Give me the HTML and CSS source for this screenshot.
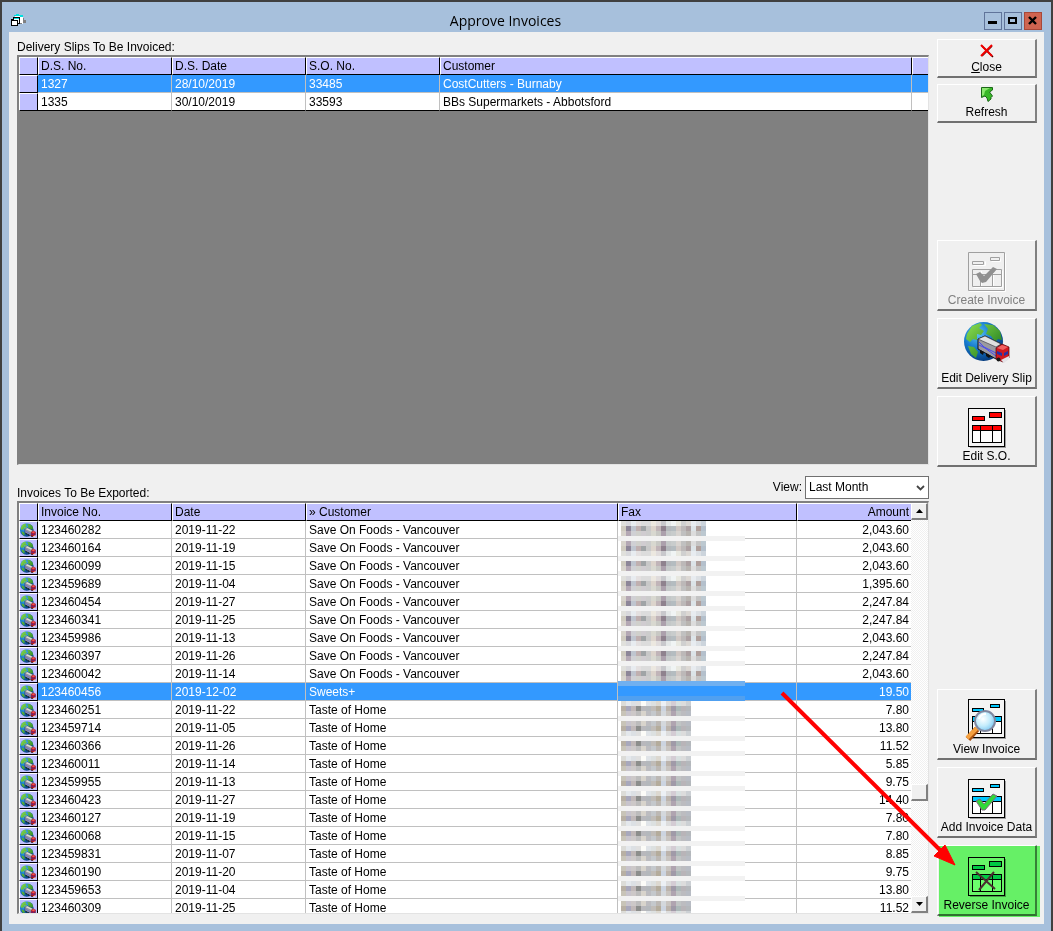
FILE: index.html
```html
<!DOCTYPE html>
<html lang="en">
<head>
  <meta charset="utf-8">
  <title>Approve Invoices</title>
  <meta name="viewport" content="width=device-width, initial-scale=1">
  <link rel="stylesheet" href="styles.css">
</head>
<body>
  <!-- shared drawings -->
  <svg class="defs" width="0" height="0" aria-hidden="true">
    <defs>
      <radialGradient id="sea" cx="0.35" cy="0.3" r="0.75">
        <stop offset="0" stop-color="#5cc4f4"/>
        <stop offset="0.5" stop-color="#1478cc"/>
        <stop offset="1" stop-color="#063878"/>
      </radialGradient>
      <linearGradient id="land" x1="0" y1="0" x2="1" y2="1">
        <stop offset="0" stop-color="#8ee050"/>
        <stop offset="1" stop-color="#127018"/>
      </linearGradient>
      <radialGradient id="lens" cx="0.4" cy="0.4" r="0.7">
        <stop offset="0" stop-color="#ffffff"/>
        <stop offset="0.5" stop-color="#c4ecfc"/>
        <stop offset="1" stop-color="#70c0f0"/>
      </radialGradient>
      <symbol id="globe-truck" viewBox="0 0 46 42">
        <circle cx="19.5" cy="19.5" r="19.5" fill="url(#sea)"/>
        <path d="M3 12 L8 4 L16 1 L18 3 L15 6 L20 9 L17 13 L13 12 L13 18 L9 17 L6 20 L2 17z M20 2 L29 3 L36 9 L38 18 L34 17 L31 20 L27 14 L22 12 L24 7z M4 24 L10 25 L14 30 L12 36 L7 32z" fill="url(#land)"/>
        <path d="M14 17 L21 14 L37 22 L37 35 L32 37 L14 27z" fill="#9a9aa0" stroke="#101018"/>
        <path d="M14 17 L21 14 L37 22 L32 25z" fill="#e0e0e0" stroke="#303038" stroke-width="0.6"/>
        <path d="M15 20 L20 25 L32 31 M15 23 L21 26 L32 34" fill="none" stroke="#4848f0"/>
        <path d="M16 28 L20 30 L19 33 L16 31z M22 31 L27 34 L25 36 L22 34z" fill="#101010"/>
        <path d="M32 26 L38 22 L45 25 L45 36 L39 40 L32 37z" fill="#d01820" stroke="#500008" stroke-width="0.7"/>
        <path d="M33 26 L38 23 L44 25 L39 28z" fill="#f06060"/>
        <path d="M33 29 L38 31 L38 34 L33 32z M40 31 L44 29 L44 32 L40 34z" fill="#2430a8"/>
        <path d="M37 38 L45 34 L45 37 L40 41z" fill="#e4e4e8"/>
        <circle cx="34.500" cy="37.500" r="2" fill="#181818"/>
      </symbol>
    </defs>
  </svg>

  <div class="window">
    <header class="titlebar">
      <svg class="app-icon" width="16" height="14" viewBox="0 0 16 14" shape-rendering="crispEdges" aria-hidden="true">
        <path d="M4 1h4v1h4v8H4z" fill="#fff"/>
        <path d="M3 1h2V0h3v1h4v2H9V2H3z" fill="#00e0e0"/>
        <path d="M12 4h1v2h2v3h-4v1H9V9h3z" fill="#808080"/>
        <path d="M2.500 3.500h6v6h-2v2h-6v-6h2z" fill="#fff" stroke="#000"/>
        <path d="M.5 6.500h6M6.500 6v4" fill="none" stroke="#000"/>
        <path d="M3 4h5v1H3z" fill="#00e0e0"/>
      </svg>
      <h1>Approve Invoices</h1>
      <div class="window-buttons">
        <button type="button" aria-label="Minimize"><svg width="16" height="16" viewBox="0 0 16 16"><path d="M3 8h9v3H3z"/></svg></button>
        <button type="button" aria-label="Maximize"><svg width="16" height="16" viewBox="0 0 16 16"><path d="M3 4h9v7H3z M5 6v3h5V6z" fill-rule="evenodd"/></svg></button>
        <button type="button" class="win-close" aria-label="Close window"><svg width="16" height="16" viewBox="0 0 16 16"><path d="M4 4l7 7M11 4l-7 7" stroke="#000" stroke-width="2.400"/></svg></button>
      </div>
    </header>

    <main class="client">
      <div class="lists">
        <h2 class="slips-label" id="slips-label">Delivery Slips To Be Invoiced:</h2>
        <div class="grid">
          <div class="grid-body">
            <table class="slips" aria-labelledby="slips-label">
              <colgroup><col class="c-mark"><col class="c-no"><col class="c-no"><col class="c-no"><col><col class="c-end"></colgroup>
              <thead>
                <tr><th></th><th>D.S. No.</th><th>D.S. Date</th><th>S.O. No.</th><th>Customer</th><th></th></tr>
              </thead>
              <tbody>
                <tr class="selected"><th></th><td>1327</td><td>28/10/2019</td><td>33485</td><td>CostCutters - Burnaby</td><td></td></tr>
                <tr><th></th><td>1335</td><td>30/10/2019</td><td>33593</td><td>BBs Supermarkets - Abbotsford</td><td></td></tr>
              </tbody>
            </table>
          </div>
        </div>

        <div class="list-bar">
          <h2 id="invoices-label">Invoices To Be Exported:</h2>
          <label for="view">View:</label>
          <span class="select">
            <select id="view">
              <option>Last Month</option>
              <option>This Month</option>
              <option>All</option>
            </select>
            <svg width="9" height="7" viewBox="0 0 9 7" aria-hidden="true"><path d="M1 1l3.500 3.500L8 1" fill="none" stroke="#444" stroke-width="1.800"/></svg>
          </span>
        </div>

        <div class="grid">
          <div class="grid-body white">
            <table aria-labelledby="invoices-label">
              <colgroup><col class="c-mark"><col class="c-no"><col class="c-no"><col class="c-customer"><col><col class="c-amount"></colgroup>
              <thead>
                <tr><th></th><th>Invoice No.</th><th>Date</th><th>» Customer</th><th>Fax</th><th class="num">Amount</th></tr>
              </thead>
              <tbody id="invoices"></tbody>
            </table>
            <svg class="redacted" id="redacted" width="127" height="396" shape-rendering="crispEdges" aria-hidden="true"></svg>
          </div>
          <div class="scrollbar">
            <button type="button" aria-label="Scroll up"><svg width="7" height="4" viewBox="0 0 7 4"><path d="M0 4L3.500 0L7 4z"/></svg></button>
            <div class="track-before"></div>
            <div class="thumb"></div>
            <div class="track-after"></div>
            <button type="button" aria-label="Scroll down"><svg width="7" height="4" viewBox="0 0 7 4"><path d="M0 0h7L3.500 4z"/></svg></button>
          </div>
        </div>
      </div>

      <aside class="actions">
        <div class="group top">
          <button type="button" class="action small">
            <svg width="14" height="15" viewBox="0 0 14 15" aria-hidden="true">
              <path d="M2 2L13 13M12 2L2 12" stroke="#400" stroke-width="1.500"/>
              <path d="M1 1L12 12M12 1L1 12" stroke="#f00000" stroke-width="2"/>
            </svg>
            <span><u>C</u>lose</span>
          </button>
          <button type="button" class="action small">
            <svg width="14" height="17" viewBox="0 0 14 17" aria-hidden="true">
              <path d="M1.500.500H12.500V3L9.500 5L12.500 9L11 10.500V12L8 14.500L7 11L5 9L1.500 10.500z" fill="#38b828" stroke="#1c6818"/>
              <path d="M2 1h8L5 4 4 8 2 9z" fill="#8ce870"/>
            </svg>
            <span>Refresh</span>
          </button>
        </div>

        <div class="group edit">
          <button type="button" class="action" disabled>
            <svg width="38" height="40" viewBox="0 0 38 40" aria-hidden="true">
              <g fill="none" stroke="#fff"><path d="M1.500 39.500h36v-38M5.500 13.500h12v-4M23.500 9.500h9v-3M5.500 35.500h29v-17M13.500 19v16M25.500 19v16"/></g>
              <g fill="none" stroke="#a0a0a0"><path d="M.5.500h36v38h-36zM4.500 9.500h11v3h-11zM22.500 5.500h9v3h-9zM4.500 17.500h29v17h-29zM4.500 22.500h29M12.500 23v11M24.500 23v11"/></g>
              <path d="M8 22l4-2 4 4 9-9 4 2-11 13-4 1-2-2z" fill="#909090"/>
            </svg>
            <span>Create Invoice</span>
          </button>
          <button type="button" class="action">
            <svg width="46" height="48" viewBox="0 0 46 48" aria-hidden="true"><use href="#globe-truck" width="46" height="42"/></svg>
            <span>Edit Delivery Slip</span>
          </button>
          <button type="button" class="action">
            <svg width="38" height="40" viewBox="0 0 38 40" shape-rendering="crispEdges" aria-hidden="true">
              <path d="M2 39.500h35.500V2" fill="none" stroke="#a0a0a0"/>
              <path d="M.5.500h36v38h-36z" fill="#f4f4f4" stroke="#000"/>
              <path d="M4.500 17.500h29v17h-29z" fill="#fff" stroke="#000"/>
              <path d="M4.500 8.500h12v4h-12zM21.500 4.500h12v5h-12zM4.500 17.500h29v5h-29z" fill="#f00" stroke="#000"/>
              <path d="M12.500 18v16M24.500 18v16" stroke="#000"/>
            </svg>
            <span>Edit S.O.</span>
          </button>
        </div>

        <div class="group invoice">
          <button type="button" class="action">
            <svg width="44" height="42" viewBox="-3 0 44 42" aria-hidden="true">
              <g shape-rendering="crispEdges">
                <path d="M2 39.500h35.500V2" fill="none" stroke="#a0a0a0"/>
                <path d="M.5.500h36v38h-36z" fill="#f4f4f4" stroke="#000"/>
                <path d="M4.500 17.500h29v17h-29z" fill="#fff" stroke="#000"/>
                <path d="M4.500 9.500h11v3h-11zM22.500 5.500h9v3h-9zM4.500 17.500h29v5h-29z" fill="#00c8ff" stroke="#000"/>
                <path d="M12.500 23v11M24.500 23v11" stroke="#000"/>
              </g>
              <path d="M9 30L0 40" stroke="#a85010" stroke-width="6"/>
              <path d="M9 29L-1 39" stroke="#f4a040" stroke-width="4"/>
              <circle cx="17" cy="22" r="10" fill="url(#lens)" stroke="#8088a0" stroke-width="2"/>
              <path d="M11 20a7 7 0 0 1 7-5" fill="none" stroke="#fff" stroke-width="2"/>
            </svg>
            <span>View Invoice</span>
          </button>
          <button type="button" class="action">
            <svg width="38" height="40" viewBox="0 0 38 40" aria-hidden="true">
              <g shape-rendering="crispEdges">
                <path d="M2 39.500h35.500V2" fill="none" stroke="#a0a0a0"/>
                <path d="M.5.500h36v38h-36z" fill="#f4f4f4" stroke="#000"/>
                <path d="M4.500 17.500h29v17h-29z" fill="#fff" stroke="#000"/>
                <path d="M4.500 9.500h11v3h-11zM22.500 5.500h9v3h-9zM4.500 17.500h29v5h-29z" fill="#00c8ff" stroke="#000"/>
                <path d="M12.500 23v11M24.500 23v11" stroke="#000"/>
              </g>
              <path d="M8 22l4-2 4 5 9-10 4 2-12 14h-3z" fill="#30d838" stroke="#806880"/>
            </svg>
            <span>Add Invoice Data</span>
          </button>
          <button type="button" class="action highlight">
            <svg width="38" height="40" viewBox="0 0 38 40" aria-hidden="true">
              <g shape-rendering="crispEdges">
                <path d="M2 39.500h35.500V2" fill="none" stroke="#a0a0a0"/>
                <path d="M.5.500h36v38h-36z" fill="#f4f4f4" stroke="#000"/>
                <path d="M4.500 17.500h29v17h-29z" fill="#fff" stroke="#000"/>
                <path d="M4.500 8.500h12v4h-12zM21.500 4.500h12v5h-12zM4.500 17.500h29v5h-29z" fill="#00c8a0" stroke="#000"/>
                <path d="M12.500 18v16M24.500 18v16" stroke="#000"/>
              </g>
              <path d="M8 15L27 32M26 15L11 33" stroke="#b03070" stroke-width="2"/>
            </svg>
            <span>Reverse Invoice</span>
          </button>
        </div>
      </aside>

      <svg class="pointer" width="176" height="176" viewBox="0 0 176 176" aria-hidden="true">
        <path d="M2 3L160 160" stroke="#f00" stroke-width="4"/>
        <path d="M175 175L154 166L165 155z" fill="#f00" stroke="#f00"/>
      </svg>
    </main>
  </div>

  <script src="invoices.js"></script>
</body>
</html>
```
FILE: styles.css
```css
* { box-sizing: border-box; }

body {
  margin: 0;
  font: 12px/16px "Liberation Sans", Arial, sans-serif;
  color: #000;
}
h1, h2 { margin: 0; font-weight: normal; font-size: inherit; }
button, select { font: inherit; color: inherit; }
svg { display: block; flex: none; }
.defs { position: absolute; }

/* window frame */
.window {
  display: flex;
  flex-direction: column;
  height: 100vh;
  min-height: 800px;
  padding: 0 7px 7px;
  background: #a7c0dc;
  border: 2px solid #404040;
  border-bottom: 0;
}
.titlebar {
  display: flex;
  align-items: center;
  height: 30px;
  padding: 7px 2px 0 2px;
  flex: none;
}
.titlebar h1 {
  flex: 1;
  font: 14px/20px "Open Sans", "Noto Sans", sans-serif;
  text-align: center;
}
.window-buttons { display: flex; gap: 2px; }
.window-buttons button {
  width: 18px;
  height: 18px;
  padding: 0;
  background: #a7c0dc;
  border: 1px solid #60749a;
}
.window-buttons .win-close { background: #cf6450; border-color: #a84838; }

.client {
  position: relative;
  display: flex;
  gap: 8px;
  flex: 1;
  min-height: 0;
  padding: 0 7px 0 8px;
  background: #f0f0f0;
}

/* left side: two lists */
.lists {
  flex: 1;
  min-width: 0;
  display: grid;
  grid-template-columns: minmax(0, 1fr);
  grid-template-rows: 23px 410fr 36px 413fr;
  padding-bottom: 10px;
}
.slips-label { padding-top: 7px; }
.list-bar {
  display: flex;
  align-items: center;
  gap: 3px;
  padding-top: 8px;
}
.list-bar h2 { flex: 1; padding-top: 12px; }
.select { position: relative; width: 124px; }
.select select {
  display: block;
  width: 100%;
  height: 23px;
  padding: 0 3px;
  appearance: none;
  background: #fff;
  border: 1px solid #707070;
  border-radius: 0;
}
.select svg { position: absolute; right: 4px; top: 9px; }

.grid {
  display: flex;
  min-height: 0;
  border: 2px solid #696969;
  border-top-color: #808080;
  border-left-color: #808080;
  border-right: 1px solid #e3e3e3;
  border-bottom: 1px solid #e3e3e3;
}
.grid-body {
  position: relative;
  flex: 1;
  overflow: hidden;
  background: #808080;
}
.grid-body.white { background: #fff; }

table {
  width: 100%;
  table-layout: fixed;
  border-collapse: separate;
  border-spacing: 0;
}
.c-mark { width: 19px; }
.c-no { width: 134px; }
.c-customer { width: 312px; }
.c-amount { width: 114px; }
.c-end { width: 16px; }
th, td {
  height: 18px;
  padding: 0 2px;
  line-height: 16px;
  font-weight: normal;
  text-align: left;
  white-space: nowrap;
  overflow: hidden;
}
th {
  background: #c0c0ff;
  border: 1px solid #000;
  border-top-color: #fff;
  border-left-color: #fff;
}
td {
  padding: 0 3px;
  background: #fff;
  border-right: 1px solid #c0c0c0;
  border-bottom: 1px solid #c0c0c0;
}
th:last-child, td:last-child { border-right: 0; }
tbody th { padding: 0; }
.slips tbody tr:last-child td { border-bottom-color: #000; }
.num { text-align: right; padding-right: 2px; }
.selected td { background: #3399ff; color: #fff; }

/* blurred out fax numbers, lies over the Fax column */
.redacted { position: absolute; top: 18px; right: 166px; }

.scrollbar {
  display: flex;
  flex-direction: column;
  width: 17px;
  background: repeating-conic-gradient(#fff 0 25%, #f0f0f0 0 50%) 0 0 / 2px 2px;
}
.scrollbar button, .thumb {
  display: flex;
  align-items: center;
  justify-content: center;
  flex: none;
  width: 17px;
  height: 17px;
  padding: 0;
  background: #f0f0f0;
  border: 1px solid #fff;
  border-right: 2px solid #808080;
  border-bottom: 2px solid #808080;
}
.track-before { flex: 264; }
.track-after { flex: 95; }

/* right side: buttons */
.actions {
  display: flex;
  flex-direction: column;
  width: 100px;
  padding: 7px 0 8px;
}
.group { display: flex; flex-direction: column; gap: 7px; }
.group.top { gap: 6px; }
.group.edit { margin-top: 117px; }
.group.invoice { margin-top: auto; }
.action {
  position: relative;
  display: flex;
  flex-direction: column;
  align-items: center;
  justify-content: flex-end;
  height: 71px;
  padding: 0 0 1px;
  background: #f0f0f0;
  border: 1px solid #fff;
  border-right: 2px solid #808080;
  border-bottom: 2px solid #707070;
  white-space: nowrap;
}
.action.small { height: 39px; }
.action:disabled { color: #808080; }
.highlight::after {
  content: "";
  position: absolute;
  inset: 0 -5px -3px 1px;
  background: #6cff6c;
  mix-blend-mode: multiply;
}

.pointer { position: absolute; right: 88px; bottom: 58px; pointer-events: none; }
```
FILE: invoices.js
```js
const SAVE_ON = 'Save On Foods - Vancouver';
const TASTE = 'Taste of Home';

const invoices = [
  ['123460282', '2019-11-22', SAVE_ON, '2,043.60'],
  ['123460164', '2019-11-19', SAVE_ON, '2,043.60'],
  ['123460099', '2019-11-15', SAVE_ON, '2,043.60'],
  ['123459689', '2019-11-04', SAVE_ON, '1,395.60'],
  ['123460454', '2019-11-27', SAVE_ON, '2,247.84'],
  ['123460341', '2019-11-25', SAVE_ON, '2,247.84'],
  ['123459986', '2019-11-13', SAVE_ON, '2,043.60'],
  ['123460397', '2019-11-26', SAVE_ON, '2,247.84'],
  ['123460042', '2019-11-14', SAVE_ON, '2,043.60'],
  ['123460456', '2019-12-02', 'Sweets+', '19.50'],
  ['123460251', '2019-11-22', TASTE, '7.80'],
  ['123459714', '2019-11-05', TASTE, '13.80'],
  ['123460366', '2019-11-26', TASTE, '11.52'],
  ['123460011', '2019-11-14', TASTE, '5.85'],
  ['123459955', '2019-11-13', TASTE, '9.75'],
  ['123460423', '2019-11-27', TASTE, '14.40'],
  ['123460127', '2019-11-19', TASTE, '7.80'],
  ['123460068', '2019-11-15', TASTE, '7.80'],
  ['123459831', '2019-11-07', TASTE, '8.85'],
  ['123460190', '2019-11-20', TASTE, '9.75'],
  ['123459653', '2019-11-04', TASTE, '13.80'],
  ['123460309', '2019-11-25', TASTE, '11.52']
];
const selected = 9;

const icon = '<svg width="16" height="15" viewBox="0 0 46 42" aria-hidden="true"><use href="#globe-truck"/></svg>';

document.getElementById('invoices').innerHTML = invoices.map(([no, date, customer, amount], i) =>
  `<tr${i === selected ? ' class="selected"' : ''}><th>${icon}</th><td>${no}</td><td>${date}</td>` +
  `<td>${customer}</td><td></td><td class="num">${amount}</td></tr>`
).join('');

// Mosaic over the fax numbers, in 5px blocks
const long = {
  strong: 'd0ccc0 8d8698 bfc5cf c0b0b0 a0a4a6 c8c8c8 dcd4cc c0b4b8 8f828e b4b8bc b4bcc0 d0c8c4 bcb8b8 aca0a2 dce4e8 b0a09c b4c0cc',
  mid: 'd8d4cc b4a8b4 d0d0d4 d0d0cc d0ccd0 cccccc d8d8d0 c8c8c4 aca0ac c4c8c8 c8cccc d8d4d0 c0c0c0 b8b4b0 dcdcdc c4c4c4 bcc8d0',
  light: 'e0e0dc d8d8dc e8ecf0 e4e0e0 dcdcdc dcdcdc ece8e0 e0dcdc c8c8cc e4e8e8 f0f4f4 e8e8e0 d0d0d0 dcd8d4 e8ecf0 dce0e4 ccd4dc'
};
const short = {
  strong: 'b8b0a4 a8a8bc c0b8b8 8c8e8c b8b8bc b4b8bc c0bcb8 b4ac9c ccd4e0 bcb4ac a09aa8 acb8b8 b8b4b8 b4b8bc',
  mid: 'c8c4b8 c8c4cc ccc8c8 bcbcbc d8d4cc bcbcc0 c4c8cc bcb8b4 d4d8dc c8c4c0 b0a4b0 c0c4c4 bcbcc0 b8bcc4',
  light: 'dcdcd8 e4e8ec dce0e4 e0e0e0 fcfcf8 e0e4e8 dce0e0 dcd8d0 ecf0f4 dcdcdc d4ccd4 d8e0e0 dcdcdc ccd0d4'
};
const bands = [
  ['light', 'strong', 'mid'],
  ['mid', 'strong', 'light'],
  ['strong', 'mid'],
  ['light', 'strong', 'mid'],
  ['mid', 'strong']
];

const rect = (x, y, w, h, fill) => `<rect x="${x}" y="${y}" width="${w}" height="${h}" fill="${fill}"/>`;
let out = rect(0, 0, 127, 396, '#fff');
let y = 0;
invoices.forEach((row, i) => {
  if (i === selected) {
    // the band before it runs right up to the selected row
    out += rect(0, 160, 127, 5, '#70b0f0') + rect(0, 165, 127, 10, '#3399ff') + rect(0, 175, 127, 5, '#50a0f0');
    y = 180;
    return;
  }
  const shades = i < selected ? long : short;
  bands[i % 5].forEach(name => {
    shades[name].split(' ').forEach((c, n) => { out += rect(3 + n * 5, y, 5, 5, '#' + c); });
    y += 5;
  });
  out += rect(0, y, 127, 5, '#f2f2f2');
  y += 5;
});
document.getElementById('redacted').innerHTML = out;
```
